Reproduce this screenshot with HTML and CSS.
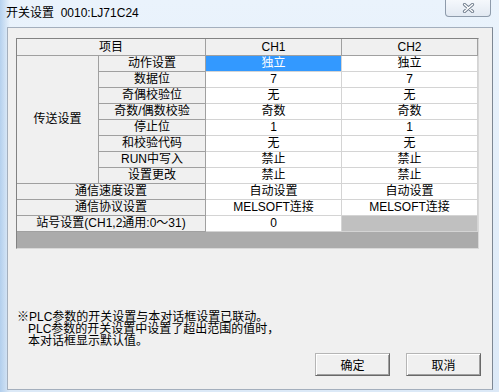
FILE: index.html
```html
<!DOCTYPE html>
<html lang="zh-CN">
<head>
    <meta charset="UTF-8">
    <meta name="viewport" content="width=device-width, initial-scale=1.0">
    <title>开关设置</title>
    <link rel="stylesheet" href="styles.css">
</head>
<body>
    <div class="window">
        <div class="titlebar">
            <span class="title">开关设置&nbsp;&nbsp;0010:LJ71C24</span>
            <button class="close" title="关闭">
                <svg width="13" height="10" viewBox="0 0 13 10">
                    <path d="M2.5 1.5 L10.5 8.5 M10.5 1.5 L2.5 8.5" stroke="#6f7c8c" stroke-width="3.2" stroke-linecap="round" fill="none"/>
                    <path d="M2.5 1.5 L10.5 8.5 M10.5 1.5 L2.5 8.5" stroke="#ffffff" stroke-width="1.4" stroke-linecap="round" fill="none"/>
                </svg>
            </button>
        </div>

        <div class="client">
            <div class="grid">
                <div class="sheet">
                    <div class="hd top span2">项目</div>
                    <div class="hd top">CH1</div>
                    <div class="hd top">CH2</div>

                    <div class="hd group">传送设置</div>
                    <div class="hd">动作设置</div>
                    <div class="sel">独立</div>
                    <div>独立</div>

                    <div class="hd">数据位</div>
                    <div>7</div>
                    <div>7</div>

                    <div class="hd">奇偶校验位</div>
                    <div>无</div>
                    <div>无</div>

                    <div class="hd">奇数/偶数校验</div>
                    <div>奇数</div>
                    <div>奇数</div>

                    <div class="hd">停止位</div>
                    <div>1</div>
                    <div>1</div>

                    <div class="hd">和校验代码</div>
                    <div>无</div>
                    <div>无</div>

                    <div class="hd">RUN中写入</div>
                    <div>禁止</div>
                    <div>禁止</div>

                    <div class="hd">设置更改</div>
                    <div>禁止</div>
                    <div>禁止</div>

                    <div class="hd span2">通信速度设置</div>
                    <div>自动设置</div>
                    <div>自动设置</div>

                    <div class="hd span2">通信协议设置</div>
                    <div>MELSOFT连接</div>
                    <div>MELSOFT连接</div>

                    <div class="hd span2">站号设置(CH1,2通用:0～31)</div>
                    <div>0</div>
                    <div class="off"></div>
                </div>
            </div>

            <div class="notes">
                <p>※PLC参数的开关设置与本对话框设置已联动。</p>
                <p class="indent">PLC参数的开关设置中设置了超出范围的值时，</p>
                <p class="indent">本对话框显示默认值。</p>
            </div>

            <div class="actions">
                <button class="btn">确定</button>
                <button class="btn">取消</button>
            </div>
        </div>
    </div>
</body>
</html>
```

FILE: styles.css
```css
body {
    margin: 0;
    font-family: "Liberation Sans", "Noto Sans CJK SC", sans-serif;
    font-size: 12px;
    color: #000;
}

.window {
    width: 499px;
    height: 392px;
    display: flex;
    flex-direction: column;
    overflow: hidden;
    background:
        linear-gradient(to right, rgba(160, 195, 232, 0.7) 0, rgba(160, 195, 232, 0) 10px),
        linear-gradient(to bottom, #eaf3fc 0, #dce9f7 100%);
}

.titlebar {
    height: 27px;
    flex-shrink: 0;
    display: flex;
    align-items: flex-start;
}

.title {
    padding: 6px 0 0 6px;
    line-height: 14px;
}

.close {
    margin-left: auto;
    margin-right: 8px;
    width: 46px;
    height: 17px;
    padding: 0;
    border: 1px solid #8e9bab;
    border-top: none;
    border-radius: 0 0 4px 4px;
    background: linear-gradient(to bottom, #f5f8fc, #e2e9f2);
    display: flex;
    align-items: center;
    justify-content: center;
}

.client {
    flex: 1;
    margin: 0 6px 2px 7px;
    background: #f0f0f0;
    border: 1px solid #a4afbd;
    border-right-color: #7d8793;
    display: flex;
    flex-direction: column;
}

/* grid control */
.grid {
    margin: 10px 0 0 8px;
    width: 463px;
    height: 211px;
    box-sizing: border-box;
    border: 1px solid;
    border-color: #828282 #d9d9d9 #d9d9d9 #828282;
    background: #ababab;
}

.sheet {
    display: grid;
    grid-template-columns: 82px 107px 136px 136px;
    grid-template-rows: 17px repeat(11, 16px);
    background: #fff;
}

.sheet > div {
    box-sizing: border-box;
    border-right: 1px solid #d4d4d4;
    border-bottom: 1px solid #d4d4d4;
    text-align: center;
    line-height: 15px;
    white-space: nowrap;
    overflow: hidden;
}

.sheet > .hd {
    background: #f0f0f0;
    border-color: #a0a0a0;
}

.sheet > .top {
    line-height: 16px;
}

.span2 {
    grid-column: span 2;
}

.sheet > .group {
    grid-row: span 8;
    display: flex;
    align-items: center;
    justify-content: center;
}

.sheet > .sel {
    background: #3399ff;
    color: #fff;
}

.sheet > .off {
    background: #c0c0c0;
}

/* footnote */
.notes {
    margin: 62px 0 0 9px;
    line-height: 12px;
}

.notes p {
    margin: 0;
    white-space: nowrap;
}

.notes .indent {
    padding-left: 11px;
}

.actions {
    display: flex;
    justify-content: flex-end;
    gap: 16px;
    margin: 6px 11px 0 0;
}

.btn {
    width: 75px;
    height: 23px;
    padding: 0;
    font: inherit;
    background: #f0f0f0;
    border: 1px solid;
    border-color: #b5b5b5 #696969 #696969 #b5b5b5;
    box-shadow: inset 1px 1px #fff, inset -1px -1px #a0a0a0;
}
```
